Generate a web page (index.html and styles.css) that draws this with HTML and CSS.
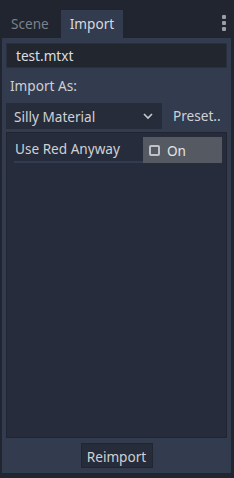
FILE: index.html
```html
<!DOCTYPE html>
<html lang="en">
<head>
    <meta charset="UTF-8">
    <title>Import</title>
    <link rel="stylesheet" href="styles.css">
</head>
<body>
    <div class="tabbar">
        <div class="tab">Scene</div>
        <div class="tab active">Import</div>
        <div class="menu">
            <span></span><span></span><span></span>
        </div>
    </div>
    <div class="panel">
        <div class="line-edit">test.mtxt</div>
        <div class="label">Import As:</div>
        <div class="option-row">
            <div class="option">
                <span>Silly Material</span>
                <svg width="12" height="8" viewBox="0 0 12 8">
                    <path d="M2 2 L6 6 L10 2" fill="none" stroke="#c8cacf" stroke-width="1.6"/>
                </svg>
            </div>
            <div class="preset">Preset..</div>
        </div>
        <div class="inspector">
            <div class="prop">
                <div class="prop-name">Use Red Anyway</div>
                <div class="prop-value">
                    <span class="check"></span>
                    <span>On</span>
                </div>
            </div>
        </div>
        <div class="footer">
            <div class="button">Reimport</div>
        </div>
    </div>
</body>
</html>
```

FILE: styles.css
```css
body {
    margin: 0;
    width: 234px;
    height: 478px;
    background: #20252f;
    font-family: 'Noto Sans', sans-serif;
    font-size: 13.6px;
    color: #cfd1d5;
    overflow: hidden;
}

.tabbar {
    display: flex;
    align-items: flex-end;
    height: 38px;
    padding-left: 2px;
    position: relative;
}

.tab {
    height: 28px;
    line-height: 27px;
    padding: 0 9px;
    color: #7c818c;
}

.tab.active {
    background: #333b4f;
    color: #d8dade;
    margin-left: 3px;
}

.menu {
    position: absolute;
    right: 8px;
    top: 15px;
    display: flex;
    flex-direction: column;
    gap: 2px;
}

.menu span {
    width: 4px;
    height: 4px;
    border-radius: 1px;
    background: #9a9da5;
}

.panel {
    margin: 0 3px 0 2px;
    height: 435px;
    background: #333b4f;
    padding: 5px 4px 5px 4px;
    box-sizing: border-box;
    display: flex;
    flex-direction: column;
}

.line-edit {
    height: 25px;
    line-height: 23px;
    background: #21262f;
    border: 1px solid #2a3040;
    box-sizing: border-box;
    padding: 0 9px;
    color: #dcdee2;
}

.label {
    height: 35px;
    line-height: 35px;
    padding-left: 4px;
}

.option-row {
    display: flex;
    height: 26px;
}

.option {
    width: 156px;
    background: #262c3a;
    display: flex;
    align-items: center;
    justify-content: space-between;
    padding: 0 8px 0 8px;
    box-sizing: border-box;
}

.preset {
    line-height: 26px;
    padding-left: 11px;
}

.inspector {
    flex: 1;
    margin-top: 3px;
    background: #262c3b;
    border: 1px solid #20252f;
    padding: 4px 4px 0 7px;
}

.prop {
    display: flex;
    height: 26px;
}

.prop-name {
    width: 128px;
    line-height: 24px;
    border-bottom: 2px solid #333b4f;
    padding-left: 1px;
}

.prop-value {
    flex: 1;
    background: #555961;
    display: flex;
    align-items: center;
    gap: 7px;
    padding-left: 6px;
    color: #e4e5e8;
}

.check {
    flex: none;
    width: 7px;
    height: 7px;
    border: 2px solid #c0c2c7;
    border-radius: 2px;
}

.footer {
    display: flex;
    justify-content: center;
    padding-top: 5px;
}

.button {
    width: 72px;
    height: 25px;
    line-height: 25px;
    text-align: center;
    background: #262c3a;
    border: 1px solid #20252f;
    box-sizing: border-box;
}
```
